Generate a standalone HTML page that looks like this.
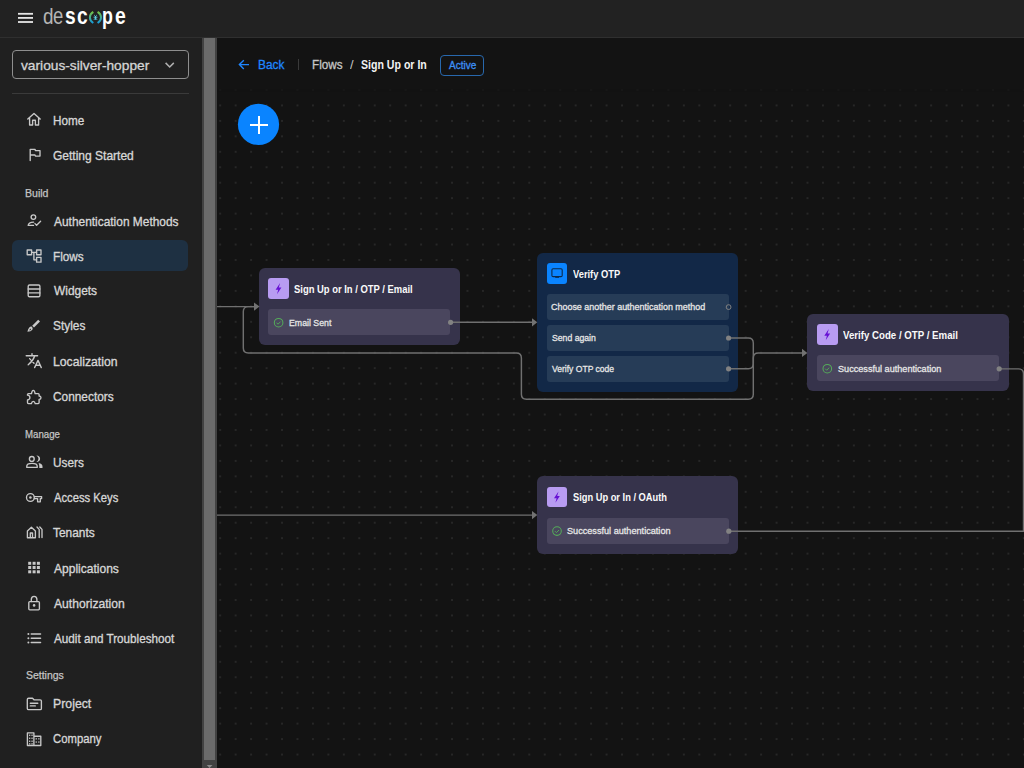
<!DOCTYPE html>
<html><head><meta charset="utf-8">
<style>
html,body{margin:0;padding:0;}
body{width:1024px;height:768px;overflow:hidden;position:relative;background:#131313;font-family:"Liberation Sans",sans-serif;}
.a{position:absolute;}
.t{position:absolute;white-space:nowrap;transform-origin:0 0;}
</style></head><body>
<!-- canvas dots + edges -->
<svg class="a" style="left:0;top:0" width="1024" height="768" viewBox="0 0 1024 768">
<defs>
<pattern id="dots" patternUnits="userSpaceOnUse" width="15.455" height="15.455" x="212.47" y="144.07">
<circle cx="7.7275" cy="7.7275" r="0.48" fill="#8e8e8e"/>
</pattern>
</defs>
<rect x="217" y="38" width="807" height="730" fill="url(#dots)"/>
<rect x="217" y="38" width="807" height="51" fill="#131313"/>
<rect x="217" y="89" width="807" height="3" fill="#131313" fill-opacity="0.75"/>
</svg>
<div class="a" style="left:258.6px;top:268px;width:201.5px;height:76.8px;background:#36334b;border-radius:6px"></div>
<div class="a" style="left:268.10px;top:278.30px;width:20.8px;height:20.8px;background:#b89cf2;border-radius:3px"></div>
<div class="a" style="left:268.10px;top:309.30px;width:182.4px;height:26px;background:#4a465e;border-radius:3px"></div>
<svg class="a" style="left:0;top:0" width="1024" height="768">
<path transform="translate(278.50,288.70)" d="M1.6,-5.6 L-2.9,1.1 L-0.3,1.1 L-1.5,5.6 L2.9,-1.1 L0.3,-1.1 Z" fill="#6710d4"/>
<circle cx="278.60" cy="322.70" r="4.3" fill="none" stroke="#55ab5a" stroke-width="1.05"/>
<path d="M276.50,322.70 L278.00,324.20 L280.60,321.60" fill="none" stroke="#52a957" stroke-width="1"/>
</svg>
<div class="a" style="left:537.1px;top:252.5px;width:201.2px;height:139px;background:#122847;border-radius:6px"></div>
<div class="a" style="left:546.60px;top:262.80px;width:20.8px;height:20.8px;background:#0a84ff;border-radius:3px"></div>
<div class="a" style="left:546.60px;top:293.80px;width:182.4px;height:26px;background:#263c57;border-radius:3px"></div>
<div class="a" style="left:546.60px;top:324.80px;width:182.4px;height:26px;background:#263c57;border-radius:3px"></div>
<div class="a" style="left:546.60px;top:355.80px;width:182.4px;height:26px;background:#263c57;border-radius:3px"></div>
<svg class="a" style="left:0;top:0" width="1024" height="768">
<rect x="551.90" y="268.80" width="10.3" height="7.8" rx="1.2" fill="none" stroke="#0d2a4a" stroke-width="1.1"/>
<rect x="555.20" y="276.60" width="3.8" height="1.2" fill="#0d2a4a"/>
</svg>
<div class="a" style="left:807.3px;top:314px;width:201.5px;height:77.3px;background:#36334b;border-radius:6px"></div>
<div class="a" style="left:816.80px;top:324.30px;width:20.8px;height:20.8px;background:#b89cf2;border-radius:3px"></div>
<div class="a" style="left:816.80px;top:355.30px;width:182.4px;height:26px;background:#4a465e;border-radius:3px"></div>
<svg class="a" style="left:0;top:0" width="1024" height="768">
<path transform="translate(827.20,334.70)" d="M1.6,-5.6 L-2.9,1.1 L-0.3,1.1 L-1.5,5.6 L2.9,-1.1 L0.3,-1.1 Z" fill="#6710d4"/>
<circle cx="827.30" cy="368.70" r="4.3" fill="none" stroke="#55ab5a" stroke-width="1.05"/>
<path d="M825.20,368.70 L826.70,370.20 L829.30,367.60" fill="none" stroke="#52a957" stroke-width="1"/>
</svg>
<div class="a" style="left:537.0px;top:476.4px;width:201.2px;height:77.4px;background:#36334b;border-radius:6px"></div>
<div class="a" style="left:546.50px;top:486.70px;width:20.8px;height:20.8px;background:#b89cf2;border-radius:3px"></div>
<div class="a" style="left:546.50px;top:517.70px;width:182.4px;height:26px;background:#4a465e;border-radius:3px"></div>
<svg class="a" style="left:0;top:0" width="1024" height="768">
<path transform="translate(556.90,497.10)" d="M1.6,-5.6 L-2.9,1.1 L-0.3,1.1 L-1.5,5.6 L2.9,-1.1 L0.3,-1.1 Z" fill="#6710d4"/>
<circle cx="557.00" cy="531.10" r="4.3" fill="none" stroke="#55ab5a" stroke-width="1.05"/>
<path d="M554.90,531.10 L556.40,532.60 L559.00,530.00" fill="none" stroke="#52a957" stroke-width="1"/>
</svg>
<svg class="a" style="left:0;top:0" width="1024" height="768" viewBox="0 0 1024 768">
<g fill="none" stroke="#707070" stroke-width="1.45">
<path d="M217,306.6 H255"/>
<path d="M450.6,322.3 H533"/>
<path d="M728.6,338 H748.3 Q753.3,338 753.3,343 V394.3 Q753.3,399.3 748.3,399.3 H526.4 Q521.4,399.3 521.4,394.3 V357.9 Q521.4,352.9 516.4,352.9 H248.3 Q243.3,352.9 243.3,347.9 V311.6 Q243.3,306.6 248.3,306.6 H255"/>
<path d="M728.6,368.8 H748.3 Q753.3,368.8 753.3,363.8 V357.9 Q753.3,352.9 758.3,352.9 H803"/>
<path d="M728.8,531.2 H1024"/>
<path d="M999.2,368.85 H1018.5 Q1023.5,368.85 1023.5,373.85 V531"/>
<path d="M217,515.1 H533"/>
</g>
<g fill="#727272">
<path d="M254,302.5 L259.5,306.6 L254,310.7 Z"/>
<path d="M532,318.2 L537.3,322.3 L532,326.4 Z"/>
<path d="M802,348.8 L807.3,352.9 L802,357 Z"/>
<path d="M532,511 L537.3,515.1 L532,519.2 Z"/>
</g>
<g fill="#828282">
<circle cx="450.6" cy="322.3" r="2.6"/>
<circle cx="728.6" cy="338" r="2.6"/>
<circle cx="728.6" cy="368.8" r="2.6"/>
<circle cx="999.2" cy="368.85" r="2.6"/>
<circle cx="728.8" cy="531.2" r="2.6"/>
</g>
<circle cx="728.6" cy="307.1" r="2.4" fill="none" stroke="#828282" stroke-width="1"/>
</svg>
<!-- top bar -->
<div class="a" style="left:0;top:0;width:1024px;height:37px;background:#222"></div>
<div class="a" style="left:0;top:37px;width:1024px;height:1px;background:#2f2f2f"></div>
<!-- sidebar -->
<div class="a" style="left:0;top:38px;width:202px;height:730px;background:#202020"></div>
<div class="a" style="left:202px;top:38px;width:15px;height:730px;background:#424242"></div>
<div class="a" style="left:204px;top:38px;width:11px;height:722px;background:#6b6b6b"></div>
<svg class="a" style="left:0;top:0" width="1024" height="768"><path d="M206.7,765 H212.5 L209.6,768 Z" fill="#8a8a8a"/></svg>
<div class="a" style="left:12px;top:50px;width:175px;height:27.2px;border:1px solid #8e8e8e;border-radius:4px"></div>
<div class="a" style="left:12px;top:93px;width:177px;height:1px;background:#3a3a3a"></div>
<div class="a" style="left:12px;top:239.9px;width:176.3px;height:31.3px;background:#1e3042;border-radius:6px"></div>
<!-- header -->
<div class="a" style="left:298px;top:59px;width:1px;height:11px;background:#3a3a3a"></div>
<div class="a" style="left:440px;top:55px;width:41.7px;height:19px;border:1px solid #2868ad;border-radius:4px"></div>
<svg class="a" style="left:0;top:0" width="1024" height="768">
<circle cx="258.5" cy="124.4" r="20.6" fill="#0a84ff"/>
<path d="M250,124.9 H268 M259,116 V134" stroke="#fff" stroke-width="2"/>
<path d="M249,64.6 H239.5 M243.8,60.2 L239.4,64.6 L243.8,69" fill="none" stroke="#1f86ff" stroke-width="1.4"/>
<!-- hamburger -->
<g fill="#e6e6e6"><rect x="18" y="12.9" width="15" height="1.8"/><rect x="18" y="17" width="15" height="1.8"/><rect x="18" y="21.1" width="15" height="1.8"/></g>
<!-- chevron -->
<path d="M165.6,62.9 L169.7,67 L173.8,62.9" fill="none" stroke="#b0b0b0" stroke-width="1.5"/>
<!-- logo brackets -->
<defs><linearGradient id="lg" x1="0" y1="0" x2="0" y2="1"><stop offset="0" stop-color="#74c243"/><stop offset="1" stop-color="#159bdc"/></linearGradient></defs>
<path d="M93.3,11.8 Q89.9,14 89.9,17.4 Q89.9,20.8 93.3,23" fill="none" stroke="url(#lg)" stroke-width="2"/>
<path d="M97.6,11.8 Q101,14 101,17.4 Q101,20.8 97.6,23" fill="none" stroke="url(#lg)" stroke-width="2"/>
<path d="M93.6,17.2 H97.4 M95.5,16 V19.8 M94,19.8 L95.5,18 L97,19.8 M94.2,15.4 H94.9 M96.1,15.4 H96.8" stroke="#5ecfe3" stroke-width="1"/>
</svg>
<svg class="a" style="left:0;top:0" width="1024" height="768">
<g fill="none" stroke="#c8c8c8" stroke-width="1.35" stroke-linejoin="round" stroke-linecap="round">
<!-- home -->
<path d="M27.8,119 L34,113.5 L40.2,119 M29.6,117.6 V125 H32.6 V120.2 H35.4 V125 H38.6 V117.6"/>
<!-- flag -->
<path d="M30.2,160.5 V149.3 H35 L35.4,150.6 H40 V156.1 H35.4 L35,155 H30.2"/>
<!-- auth methods -->
<circle cx="33.4" cy="217.1" r="2.3"/>
<path d="M28.2,225.4 Q28.6,222.3 33.6,222.2 M28.2,225.4 H33.5"/>
<path d="M35,223.6 L36.6,225.3 L40.6,221.2"/>
<!-- flows -->
<rect x="27.2" y="250" width="4.4" height="4.7"/>
<rect x="36.6" y="250" width="4.4" height="4.7"/>
<rect x="36.6" y="257.4" width="4.4" height="4.8"/>
<path d="M31.6,252.3 H36.6 M33.9,252.3 V259.8 H36.6"/>
<!-- widgets -->
<rect x="28.2" y="285" width="11.7" height="11.7" rx="1.3"/>
<path d="M28.2,289 H39.9 M28.2,292.9 H39.9"/>
<!-- localization -->
<path d="M26.2,355.7 H37.6 M32,353.6 V355.7 M34.6,356.2 Q33,361 28.2,364.8 M29.6,358.6 L34,363.2 M34.6,367.6 L38,360.4 L41.3,367.6 M35.8,365.2 H40.2"/>
<!-- connectors puzzle -->
<path d="M28.4,393.6 H31.5 Q31.9,390.4 33.3,390.4 Q34.7,390.4 35.1,393.6 H38.2 Q39.1,393.6 39.1,394.5 V396 Q41,396.2 41,397.7 Q41,399.2 39.1,399.4 V402.6 Q39.1,403.6 38.2,403.6 H35.2 Q34.8,401.4 33.3,401.4 Q31.8,401.4 31.4,403.6 H28.4 Q27.5,403.6 27.5,402.6 V400 Q29.9,399.7 29.9,397.6 Q29.9,395.5 27.5,395.2 V394.5 Q27.5,393.6 28.4,393.6 Z"/>
<!-- users -->
<circle cx="31.8" cy="458.9" r="2.4"/>
<path d="M26.8,467.4 V466 Q26.8,463.3 32,463.3 Q37.2,463.3 37.2,466 V467.4 Z"/>
<!-- key -->
<circle cx="30.4" cy="497.5" r="3.9"/>
<path d="M34.3,496.6 H41.6 V498.6 H40.3 V501.8 H37.6 V498.6 H34.3"/>
<!-- tenants -->
<path d="M27.4,537.7 V531 L31.4,527.3 L35.4,531 V537.7 Z M30.3,537.7 V533 H32.5 V537.7"/>
<path d="M37,527 L39.2,529.4 V537.6 M39.8,527 L42,529.4 V537.6"/>
<!-- lock -->
<path d="M31.3,601.5 V599.5 Q31.3,596.3 34.1,596.3 Q36.9,596.3 36.9,599.5 V601.5"/>
<rect x="28.8" y="601.6" width="10.6" height="8.2" rx="1"/>
<!-- list -->
<path d="M31.2,634 H40.6 M31.2,638.2 H40.6 M31.2,642.5 H40.6"/>
<!-- project folder -->
<path d="M27.3,699.5 Q27.3,698.2 28.6,698.2 H32.5 L34,699.8 H40.2 Q41.4,699.8 41.4,701 V708.4 Q41.4,709.6 40.2,709.6 H28.6 Q27.3,709.6 27.3,708.4 Z"/>
<path d="M30.3,703.2 H37.8 M30.3,705.9 H35.3"/>
<!-- company -->
<path d="M27.4,745.5 V732.8 H33.9 V745.5 Z M33.9,736.2 H40.8 V745.5 H33.9"/>
</g>
<g fill="#c8c8c8">
<!-- styles brush -->
<path d="M38.2,319.8 L40,321.6 L34,327.6 L32.2,325.8 Z"/>
<path d="M31.6,326.6 Q33.4,328 32.4,329.8 Q31,331.6 27.4,331.8 Q28,328.8 29.3,327.6 Q30.4,326.2 31.6,326.6 Z M30.2,328.6 Q29.6,329.5 29.4,330.4 Q30.6,330.2 31,329.4 Z" fill-rule="evenodd"/>
<!-- users second -->
<path d="M36.4,455.5 Q40.1,455.9 40.1,458.8 Q40.1,461.7 36.4,462.1 Q38.5,460.7 38.5,458.8 Q38.5,456.9 36.4,455.5 Z"/>
<path d="M38.6,462.9 Q42.5,463.5 42.5,466.4 V468 H39.3 V466.4 Q39.3,464.4 38.6,462.9 Z"/>
<circle cx="30.4" cy="497.5" r="1.3"/>
<!-- apps grid -->
<rect x="28.2" y="561.8" width="3" height="3"/><rect x="32.6" y="561.8" width="3" height="3"/><rect x="36.9" y="561.8" width="3" height="3"/>
<rect x="28.2" y="566" width="3" height="3"/><rect x="32.6" y="566" width="3" height="3"/><rect x="36.9" y="566" width="3" height="3"/>
<rect x="28.2" y="570.3" width="3" height="3"/><rect x="32.6" y="570.3" width="3" height="3"/><rect x="36.9" y="570.3" width="3" height="3"/>
<circle cx="34.1" cy="605.4" r="1.3"/>
<circle cx="28.4" cy="634" r="1"/><circle cx="28.4" cy="638.2" r="1"/><circle cx="28.4" cy="642.5" r="1"/>
<!-- company windows -->
<rect x="29" y="734.6" width="1.3" height="1.3"/><rect x="31.4" y="734.6" width="1.3" height="1.3"/>
<rect x="29" y="737.6" width="1.3" height="1.3"/><rect x="31.4" y="737.6" width="1.3" height="1.3"/>
<rect x="29" y="740.6" width="1.3" height="1.3"/><rect x="31.4" y="740.6" width="1.3" height="1.3"/>
<rect x="29" y="743.2" width="1.3" height="1.3"/><rect x="31.4" y="743.2" width="1.3" height="1.3"/>
<rect x="35.6" y="738.2" width="1.3" height="1.3"/><rect x="38.2" y="738.2" width="1.3" height="1.3"/>
<rect x="35.6" y="741.4" width="1.3" height="1.3"/><rect x="38.2" y="741.4" width="1.3" height="1.3"/>
</g>
</svg>

<div class="t" style="left:52.56px;top:114.16px;font-size:13.4px;line-height:13.4px;font-weight:normal;color:#d6d6d6;transform:scale(0.8763,1.0);transform-origin:0 11.94px;-webkit-text-stroke:0.35px #d6d6d6;">Home</div>
<div class="t" style="left:52.90px;top:148.96px;font-size:13.4px;line-height:13.4px;font-weight:normal;color:#d6d6d6;transform:scale(0.8969,1.0);transform-origin:0 11.94px;-webkit-text-stroke:0.35px #d6d6d6;">Getting Started</div>
<div class="t" style="left:53.80px;top:214.56px;font-size:13.4px;line-height:13.4px;font-weight:normal;color:#d6d6d6;transform:scale(0.8898,1.0);transform-origin:0 11.94px;-webkit-text-stroke:0.35px #d6d6d6;">Authentication Methods</div>
<div class="t" style="left:52.56px;top:249.56px;font-size:13.4px;line-height:13.4px;font-weight:normal;color:#d6d6d6;transform:scale(0.8759,1.0);transform-origin:0 11.94px;-webkit-text-stroke:0.35px #d6d6d6;">Flows</div>
<div class="t" style="left:53.50px;top:284.26px;font-size:13.4px;line-height:13.4px;font-weight:normal;color:#d6d6d6;transform:scale(0.8908,1.0);transform-origin:0 11.94px;-webkit-text-stroke:0.35px #d6d6d6;">Widgets</div>
<div class="t" style="left:52.97px;top:319.46px;font-size:13.4px;line-height:13.4px;font-weight:normal;color:#d6d6d6;transform:scale(0.8866,1.0);transform-origin:0 11.94px;-webkit-text-stroke:0.35px #d6d6d6;">Styles</div>
<div class="t" style="left:52.52px;top:354.96px;font-size:13.4px;line-height:13.4px;font-weight:normal;color:#d6d6d6;transform:scale(0.9132,1.0);transform-origin:0 11.94px;-webkit-text-stroke:0.35px #d6d6d6;">Localization</div>
<div class="t" style="left:52.91px;top:390.16px;font-size:13.4px;line-height:13.4px;font-weight:normal;color:#d6d6d6;transform:scale(0.8859,1.0);transform-origin:0 11.94px;-webkit-text-stroke:0.35px #d6d6d6;">Connectors</div>
<div class="t" style="left:52.62px;top:455.76px;font-size:13.4px;line-height:13.4px;font-weight:normal;color:#d6d6d6;transform:scale(0.8801,1.0);transform-origin:0 11.94px;-webkit-text-stroke:0.35px #d6d6d6;">Users</div>
<div class="t" style="left:53.50px;top:490.76px;font-size:13.4px;line-height:13.4px;font-weight:normal;color:#d6d6d6;transform:scale(0.8382,1.0);transform-origin:0 11.94px;-webkit-text-stroke:0.35px #d6d6d6;">Access Keys</div>
<div class="t" style="left:53.26px;top:525.96px;font-size:13.4px;line-height:13.4px;font-weight:normal;color:#d6d6d6;transform:scale(0.8897,1.0);transform-origin:0 11.94px;-webkit-text-stroke:0.35px #d6d6d6;">Tenants</div>
<div class="t" style="left:53.50px;top:561.66px;font-size:13.4px;line-height:13.4px;font-weight:normal;color:#d6d6d6;transform:scale(0.8985,1.0);transform-origin:0 11.94px;-webkit-text-stroke:0.35px #d6d6d6;">Applications</div>
<div class="t" style="left:53.50px;top:596.66px;font-size:13.4px;line-height:13.4px;font-weight:normal;color:#d6d6d6;transform:scale(0.9057,1.0);transform-origin:0 11.94px;-webkit-text-stroke:0.35px #d6d6d6;">Authorization</div>
<div class="t" style="left:53.50px;top:631.66px;font-size:13.4px;line-height:13.4px;font-weight:normal;color:#d6d6d6;transform:scale(0.8730,1.0);transform-origin:0 11.94px;-webkit-text-stroke:0.35px #d6d6d6;">Audit and Troubleshoot</div>
<div class="t" style="left:52.52px;top:697.26px;font-size:13.4px;line-height:13.4px;font-weight:normal;color:#d6d6d6;transform:scale(0.9188,1.0);transform-origin:0 11.94px;-webkit-text-stroke:0.35px #d6d6d6;">Project</div>
<div class="t" style="left:52.93px;top:732.26px;font-size:13.4px;line-height:13.4px;font-weight:normal;color:#d6d6d6;transform:scale(0.8451,1.0);transform-origin:0 11.94px;-webkit-text-stroke:0.35px #d6d6d6;">Company</div>
<div class="t" style="left:25.15px;top:187.83px;font-size:10.6px;line-height:10.6px;font-weight:normal;color:#c4c4c4;transform:scale(0.9966,1.0);transform-origin:0 9.57px;-webkit-text-stroke:0.25px #c4c4c4;">Build</div>
<div class="t" style="left:25.23px;top:429.33px;font-size:10.6px;line-height:10.6px;font-weight:normal;color:#c4c4c4;transform:scale(0.9130,1.0);transform-origin:0 9.57px;-webkit-text-stroke:0.25px #c4c4c4;">Manage</div>
<div class="t" style="left:25.53px;top:670.23px;font-size:10.6px;line-height:10.6px;font-weight:normal;color:#c4c4c4;transform:scale(0.9879,1.0);transform-origin:0 9.57px;-webkit-text-stroke:0.25px #c4c4c4;">Settings</div>
<div class="t" style="left:20.90px;top:59.56px;font-size:12.8px;line-height:12.8px;font-weight:normal;color:#d4d4d4;transform:scale(1.0733,1.0);transform-origin:0 11.44px;-webkit-text-stroke:0.3px #d4d4d4;">various-silver-hopper</div>
<div class="t" style="left:257.55px;top:59.04px;font-size:12px;line-height:12px;font-weight:normal;color:#1f86ff;transform:scale(0.9892,1.0);transform-origin:0 10.76px;-webkit-text-stroke:0.3px #1f86ff;">Back</div>
<div class="t" style="left:311.86px;top:59.24px;font-size:12px;line-height:12px;font-weight:normal;color:#c6c6c6;transform:scale(0.9748,1.0);transform-origin:0 10.76px;-webkit-text-stroke:0.3px #c6c6c6;">Flows</div>
<div class="t" style="left:350.00px;top:59.24px;font-size:12px;line-height:12px;font-weight:normal;color:#c6c6c6;transform:scale(1.0714,1.0);transform-origin:0 10.76px;">/</div>
<div class="t" style="left:361.34px;top:59.24px;font-size:12px;line-height:12px;font-weight:bold;color:#f2f2f2;transform:scale(0.8814,1.0);transform-origin:0 10.76px;">Sign Up or In</div>
<div class="t" style="left:448.80px;top:60.01px;font-size:10.5px;line-height:10.5px;font-weight:normal;color:#3d8ff5;transform:scale(0.9552,1.0);transform-origin:0 9.49px;-webkit-text-stroke:0.3px #3d8ff5;">Active</div>
<div class="t" style="left:294.06px;top:285.48px;font-size:10.3px;line-height:10.3px;font-weight:bold;color:#fafafa;transform:scale(0.9151,1.0);transform-origin:0 9.32px;">Sign Up or In / OTP / Email</div>
<div class="t" style="left:572.85px;top:269.88px;font-size:10.3px;line-height:10.3px;font-weight:bold;color:#fafafa;transform:scale(0.9050,1.0);transform-origin:0 9.32px;">Verify OTP</div>
<div class="t" style="left:842.75px;top:331.48px;font-size:10.3px;line-height:10.3px;font-weight:bold;color:#fafafa;transform:scale(0.9397,1.0);transform-origin:0 9.32px;">Verify Code / OTP / Email</div>
<div class="t" style="left:572.57px;top:493.48px;font-size:10.3px;line-height:10.3px;font-weight:bold;color:#fafafa;transform:scale(0.9027,1.0);transform-origin:0 9.32px;">Sign Up or In / OAuth</div>
<div class="t" style="left:288.50px;top:318.09px;font-size:9.7px;line-height:9.7px;font-weight:normal;color:#e6e6e6;transform:scale(0.9045,1.0);transform-origin:0 8.81px;-webkit-text-stroke:0.3px #e6e6e6;">Email Sent</div>
<div class="t" style="left:551.45px;top:302.39px;font-size:9.7px;line-height:9.7px;font-weight:normal;color:#e6e6e6;transform:scale(0.9236,1.0);transform-origin:0 8.81px;-webkit-text-stroke:0.3px #e6e6e6;">Choose another authentication method</div>
<div class="t" style="left:551.51px;top:333.29px;font-size:9.7px;line-height:9.7px;font-weight:normal;color:#e6e6e6;transform:scale(0.8948,1.0);transform-origin:0 8.81px;-webkit-text-stroke:0.3px #e6e6e6;">Send again</div>
<div class="t" style="left:551.90px;top:364.09px;font-size:9.7px;line-height:9.7px;font-weight:normal;color:#e6e6e6;transform:scale(0.8829,1.0);transform-origin:0 8.81px;-webkit-text-stroke:0.3px #e6e6e6;">Verify OTP code</div>
<div class="t" style="left:837.89px;top:364.39px;font-size:9.7px;line-height:9.7px;font-weight:normal;color:#e6e6e6;transform:scale(0.9406,1.0);transform-origin:0 8.81px;-webkit-text-stroke:0.3px #e6e6e6;">Successful authentication</div>
<div class="t" style="left:567.09px;top:526.19px;font-size:9.7px;line-height:9.7px;font-weight:normal;color:#e6e6e6;transform:scale(0.9424,1.0);transform-origin:0 8.81px;-webkit-text-stroke:0.3px #e6e6e6;">Successful authentication</div>
<div class="t" style="left:42.64px;top:4.63px;font-size:23px;line-height:23px;font-weight:normal;color:#b4b4b4;transform:scale(0.8218,0.92);transform-origin:0 20.07px;">d</div>
<div class="t" style="left:53.46px;top:4.63px;font-size:23px;line-height:23px;font-weight:normal;color:#b4b4b4;transform:scale(0.8055,1.0);transform-origin:0 20.07px;">e</div>
<div class="t" style="left:64.93px;top:4.63px;font-size:23px;line-height:23px;font-weight:bold;color:#ffffff;transform:scale(0.8337,1.0);transform-origin:0 20.07px;">s</div>
<div class="t" style="left:76.93px;top:4.63px;font-size:23px;line-height:23px;font-weight:bold;color:#ffffff;transform:scale(0.8344,1.0);transform-origin:0 20.07px;">c</div>
<div class="t" style="left:102.14px;top:4.63px;font-size:23px;line-height:23px;font-weight:bold;color:#ffffff;transform:scale(0.7749,1.0);transform-origin:0 20.07px;">p</div>
<div class="t" style="left:115.12px;top:4.63px;font-size:23px;line-height:23px;font-weight:bold;color:#ffffff;transform:scale(0.8429,1.0);transform-origin:0 20.07px;">e</div>
</body></html>
